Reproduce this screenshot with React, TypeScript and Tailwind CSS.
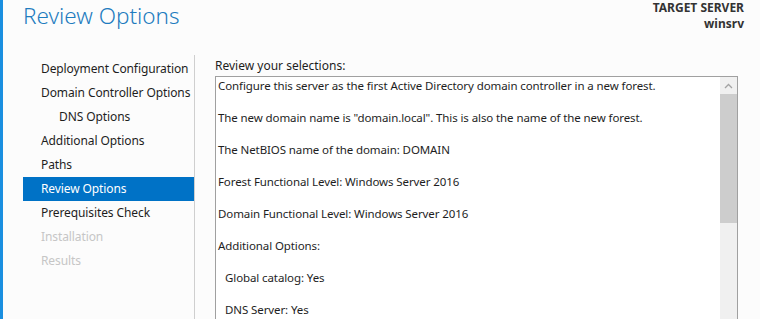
import React from "react";

const steps = [
  { label: "Deployment Configuration", indent: false, state: "normal" },
  { label: "Domain Controller Options", indent: false, state: "normal" },
  { label: "DNS Options", indent: true, state: "normal" },
  { label: "Additional Options", indent: false, state: "normal" },
  { label: "Paths", indent: false, state: "normal" },
  { label: "Review Options", indent: false, state: "active" },
  { label: "Prerequisites Check", indent: false, state: "normal" },
  { label: "Installation", indent: false, state: "disabled" },
  { label: "Results", indent: false, state: "disabled" },
];

const summary = [
  { text: "Configure this server as the first Active Directory domain controller in a new forest.", sub: false },
  { text: 'The new domain name is "domain.local". This is also the name of the new forest.', sub: false },
  { text: "The NetBIOS name of the domain: DOMAIN", sub: false },
  { text: "Forest Functional Level: Windows Server 2016", sub: false },
  { text: "Domain Functional Level: Windows Server 2016", sub: false },
  { text: "Additional Options:", sub: false },
  { text: "Global catalog: Yes", sub: true },
  { text: "DNS Server: Yes", sub: true },
];

export default function App() {
  return (
    <div
      className="w-[760px] h-[319px] overflow-hidden bg-[#fcfcfc] border-l-[3px] border-[#1a8fe0] flex flex-col text-[12px] text-[#1e1e1e]"
      style={{ fontFamily: '"Noto Sans", "Open Sans", sans-serif' }}
    >
      {/* header */}
      <div className="flex justify-between h-[55px] pl-[20px] pr-[16px]">
        <div className="text-[22.5px] font-light leading-[30px] text-[#1f7cbf] mt-[1px]">
          Review Options
        </div>
        <div className="text-right font-bold text-[#333] leading-[16px]">
          <div>TARGET SERVER</div>
          <div>winsrv</div>
        </div>
      </div>

      <div className="flex flex-1 min-h-0">
        {/* step list */}
        <div className="w-[192px] pl-[20px] pt-[2px] border-r border-[#cfcfcf] shrink-0 tracking-[-0.1px]">
          {steps.map((s) => (
            <div
              key={s.label}
              className={
                "h-[24px] flex items-center whitespace-nowrap " +
                (s.indent ? "pl-[36px] " : "pl-[18px] ") +
                (s.state === "active"
                  ? "bg-[#0072c6] text-white"
                  : s.state === "disabled"
                  ? "text-[#c6c6c6]"
                  : "text-[#1e1e1e]")
              }
            >
              {s.label}
            </div>
          ))}
        </div>

        {/* review pane */}
        <div className="flex-1 pl-[20px] pr-[22px] pt-[3px] flex flex-col min-w-0">
          <div className="leading-4">Review your selections:</div>
          <div className="mt-[2px] flex-1 flex border border-[#a0a0a0] border-b-0 bg-white min-h-0">
            <div className="flex-1 pl-[2px] pt-[1px] leading-4 text-[11.5px] tracking-[-0.1px]">
              {summary.map((line) => (
                <div key={line.text} className={"mb-4 whitespace-nowrap " + (line.sub ? "pl-[7px]" : "")}>
                  {line.text}
                </div>
              ))}
            </div>
            {/* scrollbar */}
            <div className="w-[17px] bg-[#f0f0f0] flex flex-col shrink-0">
              <div className="h-[17px] flex items-center justify-center">
                <svg width="9" height="6" viewBox="0 0 9 6">
                  <path d="M1 5 L4.5 1.5 L8 5" fill="none" stroke="#a3a3a3" strokeWidth="1.3" />
                </svg>
              </div>
              <div className="h-[129px] bg-[#cdcdcd]" />
            </div>
          </div>
        </div>
      </div>
    </div>
  );
}
